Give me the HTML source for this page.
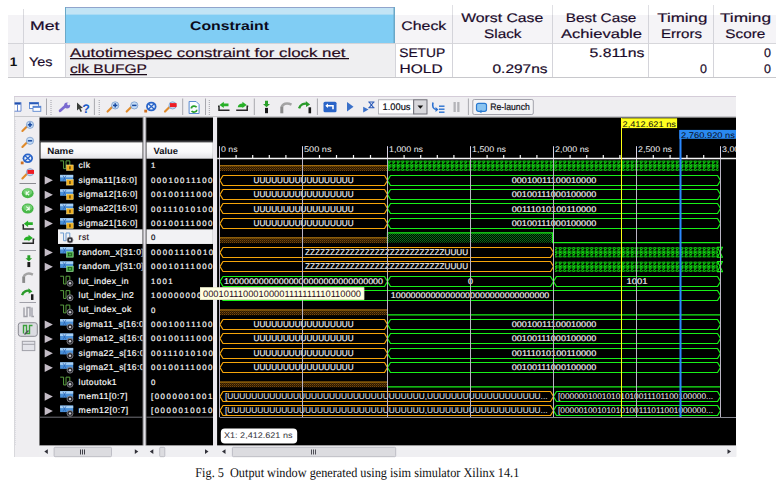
<!DOCTYPE html>
<html><head><meta charset="utf-8"><style>html,body{margin:0;padding:0;background:#fff;width:784px;height:496px;overflow:hidden}svg{display:block}</style></head>
<body><svg width="784" height="496" viewBox="0 0 784 496" shape-rendering="auto" text-rendering="geometricPrecision">
<rect x="0" y="0" width="784" height="496" fill="#ffffff"/>
<rect x="8.00" y="15.00" width="387.00" height="28.00" fill="#f4f3f6" />
<rect x="395.00" y="15.00" width="381.00" height="28.00" fill="#f5f4f7" />
<rect x="65.00" y="7.00" width="330.00" height="36.00" fill="#80cdf4" />
<rect x="65.00" y="7.00" width="330.00" height="7.60" fill="#c2e4f5" />
<line x1="65.00" y1="7.50" x2="395.00" y2="7.50" stroke="#90a4cc" stroke-width="1" />
<rect x="393.50" y="7.00" width="1.50" height="36.00" fill="#6aa8c8" />
<rect x="65.00" y="7.00" width="1.00" height="36.00" fill="#6aa8c8" />
<line x1="8.00" y1="43.50" x2="776.00" y2="43.50" stroke="#cdcdd2" stroke-width="1" />
<rect x="8.00" y="43.80" width="15.00" height="33.00" fill="#f0eff2" />
<rect x="23.00" y="43.80" width="42.00" height="33.00" fill="#ffffff" />
<rect x="65.00" y="43.80" width="330.00" height="33.00" fill="#efeff1" />
<rect x="395.00" y="43.80" width="381.00" height="33.00" fill="#ffffff" />
<line x1="8.00" y1="77.50" x2="776.00" y2="77.50" stroke="#c8c8cc" stroke-width="1" />
<line x1="23.50" y1="15.00" x2="23.50" y2="77.00" stroke="#d4d4da" stroke-width="1" />
<line x1="65.50" y1="43.50" x2="65.50" y2="77.00" stroke="#d4d4da" stroke-width="1" />
<line x1="395.50" y1="43.50" x2="395.50" y2="77.00" stroke="#d4d4da" stroke-width="1" />
<line x1="452.50" y1="15.00" x2="452.50" y2="77.00" stroke="#d4d4da" stroke-width="1" />
<line x1="552.50" y1="15.00" x2="552.50" y2="77.00" stroke="#d4d4da" stroke-width="1" />
<line x1="648.50" y1="15.00" x2="648.50" y2="77.00" stroke="#d4d4da" stroke-width="1" />
<line x1="713.50" y1="15.00" x2="713.50" y2="77.00" stroke="#d4d4da" stroke-width="1" />
<line x1="23.50" y1="9.00" x2="23.50" y2="15.00" stroke="#dcdce0" stroke-width="1" />
<line x1="452.50" y1="5.00" x2="452.50" y2="15.00" stroke="#e0e0e4" stroke-width="1" />
<line x1="552.50" y1="5.00" x2="552.50" y2="15.00" stroke="#e0e0e4" stroke-width="1" />
<line x1="648.50" y1="5.00" x2="648.50" y2="15.00" stroke="#e0e0e4" stroke-width="1" />
<line x1="713.50" y1="5.00" x2="713.50" y2="15.00" stroke="#e0e0e4" stroke-width="1" />
<text x="30.00" y="29.70" font-size="12.5" fill="#1a0a2a" font-family="Liberation Sans" textLength="29.50" lengthAdjust="spacingAndGlyphs" stroke="#1a0a2a" stroke-width="0.18" >Met</text>
<text x="190.00" y="29.80" font-size="12.5" fill="#0a0a1a" font-family="Liberation Sans" font-weight="bold" textLength="79.00" lengthAdjust="spacingAndGlyphs" >Constraint</text>
<text x="401.30" y="29.60" font-size="12.5" fill="#1a0a2a" font-family="Liberation Sans" textLength="45.00" lengthAdjust="spacingAndGlyphs" stroke="#1a0a2a" stroke-width="0.18" >Check</text>
<text x="461.20" y="21.90" font-size="12.5" fill="#1a0a2a" font-family="Liberation Sans" textLength="82.00" lengthAdjust="spacingAndGlyphs" stroke="#1a0a2a" stroke-width="0.18" >Worst Case</text>
<text x="484.00" y="38.00" font-size="12.5" fill="#1a0a2a" font-family="Liberation Sans" textLength="37.50" lengthAdjust="spacingAndGlyphs" stroke="#1a0a2a" stroke-width="0.18" >Slack</text>
<text x="565.80" y="21.90" font-size="12.5" fill="#1a0a2a" font-family="Liberation Sans" textLength="70.50" lengthAdjust="spacingAndGlyphs" stroke="#1a0a2a" stroke-width="0.18" >Best Case</text>
<text x="561.00" y="38.00" font-size="12.5" fill="#1a0a2a" font-family="Liberation Sans" textLength="81.00" lengthAdjust="spacingAndGlyphs" stroke="#1a0a2a" stroke-width="0.18" >Achievable</text>
<text x="657.30" y="21.90" font-size="12.5" fill="#1a0a2a" font-family="Liberation Sans" textLength="50.00" lengthAdjust="spacingAndGlyphs" stroke="#1a0a2a" stroke-width="0.18" >Timing</text>
<text x="661.00" y="38.00" font-size="12.5" fill="#1a0a2a" font-family="Liberation Sans" textLength="41.00" lengthAdjust="spacingAndGlyphs" stroke="#1a0a2a" stroke-width="0.18" >Errors</text>
<text x="720.00" y="21.90" font-size="12.5" fill="#1a0a2a" font-family="Liberation Sans" textLength="51.00" lengthAdjust="spacingAndGlyphs" stroke="#1a0a2a" stroke-width="0.18" >Timing</text>
<text x="725.30" y="38.00" font-size="12.5" fill="#1a0a2a" font-family="Liberation Sans" textLength="40.00" lengthAdjust="spacingAndGlyphs" stroke="#1a0a2a" stroke-width="0.18" >Score</text>
<text x="9.80" y="65.80" font-size="12.5" fill="#111" font-family="Liberation Sans" font-weight="bold" textLength="7.50" lengthAdjust="spacingAndGlyphs" >1</text>
<text x="29.00" y="66.00" font-size="12.5" fill="#1a0a2a" font-family="Liberation Sans" textLength="23.50" lengthAdjust="spacingAndGlyphs" stroke="#1a0a2a" stroke-width="0.18" >Yes</text>
<text x="70.00" y="56.50" font-size="12.5" fill="#2a0a20" font-family="Liberation Sans" textLength="275.50" lengthAdjust="spacingAndGlyphs" stroke="#2a0a20" stroke-width="0.18" >Autotimespec constraint for clock net</text>
<line x1="70.00" y1="58.60" x2="349.00" y2="58.60" stroke="#1a0a18" stroke-width="1.3" />
<text x="70.00" y="72.70" font-size="12.5" fill="#2a0a20" font-family="Liberation Sans" textLength="77.00" lengthAdjust="spacingAndGlyphs" stroke="#2a0a20" stroke-width="0.18" >clk BUFGP</text>
<line x1="70.00" y1="74.60" x2="147.00" y2="74.60" stroke="#1a0a18" stroke-width="1.3" />
<text x="399.20" y="56.80" font-size="12.5" fill="#1a0a2a" font-family="Liberation Sans" textLength="46.00" lengthAdjust="spacingAndGlyphs" stroke="#1a0a2a" stroke-width="0.18" >SETUP</text>
<text x="399.60" y="72.60" font-size="12.5" fill="#1a0a2a" font-family="Liberation Sans" textLength="43.00" lengthAdjust="spacingAndGlyphs" stroke="#1a0a2a" stroke-width="0.18" >HOLD</text>
<text x="589.50" y="56.60" font-size="12.5" fill="#1a0a2a" font-family="Liberation Sans" textLength="55.00" lengthAdjust="spacingAndGlyphs" stroke="#1a0a2a" stroke-width="0.18" >5.811ns</text>
<text x="492.50" y="72.70" font-size="12.5" fill="#1a0a2a" font-family="Liberation Sans" textLength="55.00" lengthAdjust="spacingAndGlyphs" stroke="#1a0a2a" stroke-width="0.18" >0.297ns</text>
<text x="707.00" y="72.60" font-size="12.5" fill="#1a0a2a" font-family="Liberation Sans" text-anchor="end" stroke="#1a0a2a" stroke-width="0.18" >0</text>
<text x="771.00" y="56.60" font-size="12.5" fill="#1a0a2a" font-family="Liberation Sans" text-anchor="end" stroke="#1a0a2a" stroke-width="0.18" >0</text>
<text x="771.00" y="72.60" font-size="12.5" fill="#1a0a2a" font-family="Liberation Sans" text-anchor="end" stroke="#1a0a2a" stroke-width="0.18" >0</text>
<rect x="14.00" y="96.00" width="722.00" height="361.00" fill="#efeef1" />
<line x1="14.50" y1="96.00" x2="14.50" y2="457.00" stroke="#d8d8dc" stroke-width="1" />
<line x1="14.00" y1="96.50" x2="736.00" y2="96.50" stroke="#d4ccd8" stroke-width="1" />
<line x1="14.00" y1="116.50" x2="736.00" y2="116.50" stroke="#c8c8cc" stroke-width="1" />
<rect x="39.50" y="117.50" width="103.00" height="328.10" fill="#000" />
<rect x="142.50" y="117.50" width="1.00" height="328.10" fill="#000" />
<rect x="146.30" y="117.50" width="66.70" height="328.10" fill="#000" />
<rect x="145.50" y="117.50" width="0.80" height="328.10" fill="#000" />
<rect x="143.50" y="117.50" width="2.00" height="328.10" fill="#e4e2e8" />
<rect x="213.00" y="117.50" width="4.10" height="328.10" fill="#ebe9ee" />
<rect x="217.10" y="117.50" width="518.90" height="328.10" fill="#000" />
<line x1="39.50" y1="141.20" x2="142.50" y2="141.20" stroke="#5a5a60" stroke-width="1" />
<line x1="146.30" y1="141.20" x2="213.00" y2="141.20" stroke="#5a5a60" stroke-width="1" />
<defs><linearGradient id="hg" x1="0" y1="0" x2="0" y2="1"><stop offset="0" stop-color="#ffffff"/><stop offset="0.6" stop-color="#f8f8fa"/><stop offset="1" stop-color="#e2e2e6"/></linearGradient></defs>
<rect x="40.50" y="142.30" width="102.00" height="16.40" fill="url(#hg)" />
<rect x="146.50" y="142.30" width="66.40" height="16.40" fill="url(#hg)" />
<text x="47.20" y="153.80" font-size="9" fill="#101018" font-family="Liberation Sans" font-weight="bold" textLength="26.50" lengthAdjust="spacingAndGlyphs" >Name</text>
<text x="153.50" y="153.80" font-size="9" fill="#101018" font-family="Liberation Sans" font-weight="bold" textLength="24.50" lengthAdjust="spacingAndGlyphs" >Value</text>
<line x1="46.50" y1="98.50" x2="46.50" y2="115.00" stroke="#a8a8ae" stroke-width="1" />
<line x1="94.40" y1="98.50" x2="94.40" y2="115.00" stroke="#a8a8ae" stroke-width="1" />
<line x1="182.70" y1="98.50" x2="182.70" y2="115.00" stroke="#a8a8ae" stroke-width="1" />
<line x1="205.50" y1="98.50" x2="205.50" y2="115.00" stroke="#a8a8ae" stroke-width="1" />
<line x1="254.30" y1="98.50" x2="254.30" y2="115.00" stroke="#a8a8ae" stroke-width="1" />
<line x1="317.40" y1="98.50" x2="317.40" y2="115.00" stroke="#a8a8ae" stroke-width="1" />
<line x1="468.40" y1="98.50" x2="468.40" y2="115.00" stroke="#a8a8ae" stroke-width="1" />
<rect x="50.50" y="100.00" width="1.00" height="1.00" fill="#a0a0a8" />
<rect x="50.50" y="102.00" width="1.00" height="1.00" fill="#a0a0a8" />
<rect x="50.50" y="104.00" width="1.00" height="1.00" fill="#a0a0a8" />
<rect x="50.50" y="106.00" width="1.00" height="1.00" fill="#a0a0a8" />
<rect x="50.50" y="108.00" width="1.00" height="1.00" fill="#a0a0a8" />
<rect x="50.50" y="110.00" width="1.00" height="1.00" fill="#a0a0a8" />
<rect x="50.50" y="112.00" width="1.00" height="1.00" fill="#a0a0a8" />
<rect x="50.50" y="114.00" width="1.00" height="1.00" fill="#a0a0a8" />
<rect x="98.70" y="100.00" width="1.00" height="1.00" fill="#a0a0a8" />
<rect x="98.70" y="102.00" width="1.00" height="1.00" fill="#a0a0a8" />
<rect x="98.70" y="104.00" width="1.00" height="1.00" fill="#a0a0a8" />
<rect x="98.70" y="106.00" width="1.00" height="1.00" fill="#a0a0a8" />
<rect x="98.70" y="108.00" width="1.00" height="1.00" fill="#a0a0a8" />
<rect x="98.70" y="110.00" width="1.00" height="1.00" fill="#a0a0a8" />
<rect x="98.70" y="112.00" width="1.00" height="1.00" fill="#a0a0a8" />
<rect x="98.70" y="114.00" width="1.00" height="1.00" fill="#a0a0a8" />
<rect x="208.80" y="100.00" width="1.00" height="1.00" fill="#a0a0a8" />
<rect x="208.80" y="102.00" width="1.00" height="1.00" fill="#a0a0a8" />
<rect x="208.80" y="104.00" width="1.00" height="1.00" fill="#a0a0a8" />
<rect x="208.80" y="106.00" width="1.00" height="1.00" fill="#a0a0a8" />
<rect x="208.80" y="108.00" width="1.00" height="1.00" fill="#a0a0a8" />
<rect x="208.80" y="110.00" width="1.00" height="1.00" fill="#a0a0a8" />
<rect x="208.80" y="112.00" width="1.00" height="1.00" fill="#a0a0a8" />
<rect x="208.80" y="114.00" width="1.00" height="1.00" fill="#a0a0a8" />
<rect x="14.50" y="102.30" width="6.50" height="9.00" fill="#ffffff" />
<rect x="14.50" y="102.30" width="6.50" height="2.30" fill="#2050b0" />
<line x1="17.50" y1="104.60" x2="17.50" y2="111.20" stroke="#6a8ad0" stroke-width="1" />
<line x1="14.50" y1="111.20" x2="21.00" y2="111.20" stroke="#6a8ad0" stroke-width="1" />
<line x1="21.00" y1="102.30" x2="21.00" y2="111.20" stroke="#6a8ad0" stroke-width="1" />
<rect x="29.5" y="102.5" width="9" height="6" fill="#fff" stroke="#5a86d0" stroke-width="0.9"/>
<rect x="29.50" y="102.50" width="9.00" height="1.80" fill="#2a5ab8" />
<rect x="33" y="106.3" width="7.8" height="5" fill="#fff" stroke="#5a86d0" stroke-width="0.9"/>
<rect x="33.00" y="106.30" width="7.80" height="1.50" fill="#4a7ad0" />
<g transform="translate(58.60,102.30) scale(1.0)"><path d="M1.5,8.5 L6.5,4" stroke="#7a6ad0" stroke-width="2.8" stroke-linecap="round"/><circle cx="8.5" cy="3.2" r="3" fill="#7a6ad0"/><circle cx="10" cy="1.6" r="1.4" fill="#efeef1"/></g>
<g transform="translate(77.00,102.50) scale(1.0)"><path d="M0,0 L0,8 L2,6.3 L3.6,9.5 L5,8.8 L3.5,5.8 L6,5.6 Z" fill="#383c38"/><text x="5.2" y="10" font-size="12.5" font-weight="bold" fill="#1a5ac8" font-family="Liberation Sans">?</text></g>
<g transform="translate(106.40,101.60) scale(1.0)"><line x1="1.2" y1="10" x2="6" y2="5.2" stroke="#e08a2a" stroke-width="2.1" stroke-linecap="round"/><circle cx="8.8" cy="3.8" r="3.6" fill="#c4dcf6" stroke="#7a9ccc" stroke-width="0.8"/><line x1="6.6" y1="3.8" x2="11" y2="3.8" stroke="#1a4aa0" stroke-width="1.5"/><line x1="8.8" y1="1.6" x2="8.8" y2="6" stroke="#1a4aa0" stroke-width="1.5"/></g>
<g transform="translate(125.50,101.60) scale(1.0)"><line x1="1.2" y1="10" x2="6" y2="5.2" stroke="#e08a2a" stroke-width="2.1" stroke-linecap="round"/><circle cx="8.8" cy="3.8" r="3.6" fill="#c4dcf6" stroke="#7a9ccc" stroke-width="0.8"/><line x1="6.6" y1="3.8" x2="11" y2="3.8" stroke="#1a4aa0" stroke-width="1.5"/></g>
<g transform="translate(144.00,101.50) scale(1.0)"><rect x="0.3" y="8.2" width="2.8" height="2.8" fill="#d07020"/><ellipse cx="7.3" cy="5" rx="5.2" ry="4.8" fill="#2a64c8"/><ellipse cx="7.3" cy="5" rx="3.4" ry="3" fill="#e8f0fc"/><path d="M4.3,2.2 L10.3,7.8 M10.3,2.2 L4.3,7.8" stroke="#2a64c8" stroke-width="1.3"/></g>
<g transform="translate(163.80,101.60) scale(1.0)"><line x1="1.2" y1="10" x2="6" y2="5.2" stroke="#e08a2a" stroke-width="2.1" stroke-linecap="round"/><circle cx="8.8" cy="3.8" r="3.6" fill="#c4dcf6" stroke="#7a9ccc" stroke-width="0.8"/><rect x="6.2" y="1.5" width="6.6" height="4" fill="#ee1c24"/></g>
<g transform="translate(188.60,101.00) scale(1.0)"><path d="M0.5,0.5 H7.5 L10.5,3.5 V12.5 H0.5 Z" fill="#f8fbff" stroke="#5a8ad0" stroke-width="1"/><path d="M2.8,7.5 A2.8,2.3 0 0 1 8,6.2" stroke="#2aa02a" stroke-width="1.7" fill="none"/><path d="M8.2,8.8 A2.8,2.3 0 0 1 3,10" stroke="#2aa02a" stroke-width="1.7" fill="none"/></g>
<g transform="translate(217.00,101.70) scale(1.0)"><path d="M1,4.5 H2 V8.5 H12.5" stroke="#282828" stroke-width="1.5" fill="none"/><path d="M2.5,3.2 L6.8,0 V1.8 H11.5 V4.6 H6.8 V6.4 Z" fill="#28b028"/></g>
<g transform="translate(235.20,101.70) scale(1.0)"><path d="M1,8.5 H12 V4.5 H13" stroke="#282828" stroke-width="1.5" fill="none"/><path d="M11.5,3.2 L7.2,0 V1.8 C4.5,1.8 3,3 2.5,5.5 H7.2 V6.4 Z" fill="#28b028"/></g>
<g transform="translate(263.00,100.70) scale(1.0)"><path d="M2,0 H5 V3.2 H7 L3.5,6.5 L0,3.2 H2 Z" fill="#2aa02a"/><rect x="2" y="7.2" width="3" height="5.3" fill="#1a1a1a"/></g>
<g transform="translate(279.50,101.80) scale(1.0)"><path d="M2.2,5.5 C3,2 7,0.5 12,2.8" stroke="#a4a4a4" stroke-width="2.6" fill="none"/><rect x="0.8" y="5" width="3" height="6.5" fill="#8a8a8a"/></g>
<g transform="translate(298.30,102.30) scale(1.0)"><path d="M0.8,6 C2,2 6,0.8 8.5,1.5" stroke="#2a9a2a" stroke-width="2.4" fill="none"/><path d="M7.5,-1.2 L11.8,2.2 L7.8,4.6 Z" fill="#2a9a2a"/><rect x="10.2" y="5" width="2.6" height="6" fill="#1a1a1a"/></g>
<g transform="translate(323.50,101.70) scale(1.0)"><rect x="0" y="0" width="13" height="10.5" rx="1.5" fill="#2a64c8"/><path d="M3,4 H9.5 V7.5" stroke="#fff" stroke-width="1.6" fill="none"/><path d="M1.8,4 L4.5,1.8 V6.2 Z" fill="#fff"/></g>
<path d="M347,102 L353.5,106.8 L347,111.6 Z" fill="#3a70c8"/>
<path d="M363.2,106.8 L368.5,109.6 L363.2,112.4 Z" fill="#3a70c8"/>
<path d="M368.3,102 H374.5 M368.3,107.8 H374.5 M369,102 L373.8,107.8 M373.8,102 L369,107.8" stroke="#2a5ab8" stroke-width="1.1" fill="none"/>
<rect x="378.5" y="99.8" width="35.2" height="14.2" fill="#ffffff" stroke="#a8a8b0" stroke-width="0.8"/>
<text x="382.50" y="110.30" font-size="9.5" fill="#101018" font-family="Liberation Sans" textLength="28.00" lengthAdjust="spacingAndGlyphs" stroke="#101018" stroke-width="0.2" >1.00us</text>
<rect x="413.7" y="99.8" width="13.3" height="14.2" fill="#d8d8dc" stroke="#606068" stroke-width="0.9"/>
<path d="M417.5,105.5 L423.2,105.5 L420.35,108.8 Z" fill="#101010"/>
<g transform="translate(432.00,101.50) scale(1.0)"><path d="M1,1 C0,5 1,8 5,8" stroke="#2a70d0" stroke-width="1.6" fill="none"/><path d="M3.5,5.5 L6.5,8 L3.5,10.5 Z" fill="#2a70d0"/><rect x="7" y="4" width="5.5" height="1.4" fill="#2a70d0"/><rect x="7" y="7" width="5.5" height="1.4" fill="#2a70d0"/><rect x="7" y="10" width="5.5" height="1.4" fill="#2a70d0"/></g>
<rect x="453.50" y="102.00" width="2.30" height="10.00" fill="#b4b4b8" />
<rect x="457.20" y="102.00" width="2.30" height="10.00" fill="#b4b4b8" />
<rect x="472.8" y="99.5" width="60.5" height="15" rx="1.5" fill="#f4f4f6" stroke="#9a9aa4" stroke-width="0.9"/>
<g transform="translate(476.00,102.30) scale(1.0)"><rect x="0.5" y="1" width="10" height="8" rx="2" fill="#8ac4f0" stroke="#2a7ad0" stroke-width="1.2"/><path d="M3,9.5 L5.5,7.5 L5.5,11 Z" fill="#2a7ad0"/></g>
<text x="490.30" y="110.30" font-size="9.5" fill="#101018" font-family="Liberation Sans" textLength="39.50" lengthAdjust="spacingAndGlyphs" stroke="#101018" stroke-width="0.2" >Re-launch</text>
<rect x="15.00" y="120.00" width="1.00" height="1.00" fill="#dcdce2" />
<rect x="15.00" y="122.00" width="1.00" height="1.00" fill="#dcdce2" />
<rect x="15.00" y="124.00" width="1.00" height="1.00" fill="#dcdce2" />
<rect x="15.00" y="126.00" width="1.00" height="1.00" fill="#dcdce2" />
<rect x="15.00" y="128.00" width="1.00" height="1.00" fill="#dcdce2" />
<rect x="15.00" y="130.00" width="1.00" height="1.00" fill="#dcdce2" />
<rect x="15.00" y="132.00" width="1.00" height="1.00" fill="#dcdce2" />
<rect x="15.00" y="134.00" width="1.00" height="1.00" fill="#dcdce2" />
<rect x="15.00" y="136.00" width="1.00" height="1.00" fill="#dcdce2" />
<rect x="15.00" y="138.00" width="1.00" height="1.00" fill="#dcdce2" />
<rect x="15.00" y="140.00" width="1.00" height="1.00" fill="#dcdce2" />
<rect x="15.00" y="142.00" width="1.00" height="1.00" fill="#dcdce2" />
<rect x="15.00" y="144.00" width="1.00" height="1.00" fill="#dcdce2" />
<rect x="15.00" y="146.00" width="1.00" height="1.00" fill="#dcdce2" />
<rect x="15.00" y="148.00" width="1.00" height="1.00" fill="#dcdce2" />
<rect x="15.00" y="150.00" width="1.00" height="1.00" fill="#dcdce2" />
<rect x="15.00" y="152.00" width="1.00" height="1.00" fill="#dcdce2" />
<rect x="15.00" y="154.00" width="1.00" height="1.00" fill="#dcdce2" />
<rect x="15.00" y="156.00" width="1.00" height="1.00" fill="#dcdce2" />
<rect x="15.00" y="158.00" width="1.00" height="1.00" fill="#dcdce2" />
<rect x="15.00" y="160.00" width="1.00" height="1.00" fill="#dcdce2" />
<rect x="15.00" y="162.00" width="1.00" height="1.00" fill="#dcdce2" />
<rect x="15.00" y="164.00" width="1.00" height="1.00" fill="#dcdce2" />
<rect x="15.00" y="166.00" width="1.00" height="1.00" fill="#dcdce2" />
<rect x="15.00" y="168.00" width="1.00" height="1.00" fill="#dcdce2" />
<rect x="15.00" y="170.00" width="1.00" height="1.00" fill="#dcdce2" />
<rect x="15.00" y="172.00" width="1.00" height="1.00" fill="#dcdce2" />
<rect x="15.00" y="174.00" width="1.00" height="1.00" fill="#dcdce2" />
<rect x="15.00" y="176.00" width="1.00" height="1.00" fill="#dcdce2" />
<rect x="15.00" y="178.00" width="1.00" height="1.00" fill="#dcdce2" />
<rect x="15.00" y="180.00" width="1.00" height="1.00" fill="#dcdce2" />
<rect x="15.00" y="182.00" width="1.00" height="1.00" fill="#dcdce2" />
<rect x="15.00" y="184.00" width="1.00" height="1.00" fill="#dcdce2" />
<rect x="15.00" y="186.00" width="1.00" height="1.00" fill="#dcdce2" />
<rect x="15.00" y="188.00" width="1.00" height="1.00" fill="#dcdce2" />
<rect x="15.00" y="190.00" width="1.00" height="1.00" fill="#dcdce2" />
<rect x="15.00" y="192.00" width="1.00" height="1.00" fill="#dcdce2" />
<rect x="15.00" y="194.00" width="1.00" height="1.00" fill="#dcdce2" />
<rect x="15.00" y="196.00" width="1.00" height="1.00" fill="#dcdce2" />
<rect x="15.00" y="198.00" width="1.00" height="1.00" fill="#dcdce2" />
<rect x="15.00" y="200.00" width="1.00" height="1.00" fill="#dcdce2" />
<rect x="15.00" y="202.00" width="1.00" height="1.00" fill="#dcdce2" />
<rect x="15.00" y="204.00" width="1.00" height="1.00" fill="#dcdce2" />
<rect x="15.00" y="206.00" width="1.00" height="1.00" fill="#dcdce2" />
<rect x="15.00" y="208.00" width="1.00" height="1.00" fill="#dcdce2" />
<rect x="15.00" y="210.00" width="1.00" height="1.00" fill="#dcdce2" />
<rect x="15.00" y="212.00" width="1.00" height="1.00" fill="#dcdce2" />
<rect x="15.00" y="214.00" width="1.00" height="1.00" fill="#dcdce2" />
<rect x="15.00" y="216.00" width="1.00" height="1.00" fill="#dcdce2" />
<rect x="15.00" y="218.00" width="1.00" height="1.00" fill="#dcdce2" />
<rect x="15.00" y="220.00" width="1.00" height="1.00" fill="#dcdce2" />
<rect x="15.00" y="222.00" width="1.00" height="1.00" fill="#dcdce2" />
<rect x="15.00" y="224.00" width="1.00" height="1.00" fill="#dcdce2" />
<rect x="15.00" y="226.00" width="1.00" height="1.00" fill="#dcdce2" />
<rect x="15.00" y="228.00" width="1.00" height="1.00" fill="#dcdce2" />
<rect x="15.00" y="230.00" width="1.00" height="1.00" fill="#dcdce2" />
<rect x="15.00" y="232.00" width="1.00" height="1.00" fill="#dcdce2" />
<rect x="15.00" y="234.00" width="1.00" height="1.00" fill="#dcdce2" />
<rect x="15.00" y="236.00" width="1.00" height="1.00" fill="#dcdce2" />
<rect x="15.00" y="238.00" width="1.00" height="1.00" fill="#dcdce2" />
<rect x="15.00" y="240.00" width="1.00" height="1.00" fill="#dcdce2" />
<rect x="15.00" y="242.00" width="1.00" height="1.00" fill="#dcdce2" />
<rect x="15.00" y="244.00" width="1.00" height="1.00" fill="#dcdce2" />
<rect x="15.00" y="246.00" width="1.00" height="1.00" fill="#dcdce2" />
<rect x="15.00" y="248.00" width="1.00" height="1.00" fill="#dcdce2" />
<rect x="15.00" y="250.00" width="1.00" height="1.00" fill="#dcdce2" />
<rect x="15.00" y="252.00" width="1.00" height="1.00" fill="#dcdce2" />
<rect x="15.00" y="254.00" width="1.00" height="1.00" fill="#dcdce2" />
<rect x="15.00" y="256.00" width="1.00" height="1.00" fill="#dcdce2" />
<rect x="15.00" y="258.00" width="1.00" height="1.00" fill="#dcdce2" />
<rect x="15.00" y="260.00" width="1.00" height="1.00" fill="#dcdce2" />
<rect x="15.00" y="262.00" width="1.00" height="1.00" fill="#dcdce2" />
<rect x="15.00" y="264.00" width="1.00" height="1.00" fill="#dcdce2" />
<rect x="15.00" y="266.00" width="1.00" height="1.00" fill="#dcdce2" />
<rect x="15.00" y="268.00" width="1.00" height="1.00" fill="#dcdce2" />
<rect x="15.00" y="270.00" width="1.00" height="1.00" fill="#dcdce2" />
<rect x="15.00" y="272.00" width="1.00" height="1.00" fill="#dcdce2" />
<rect x="15.00" y="274.00" width="1.00" height="1.00" fill="#dcdce2" />
<rect x="15.00" y="276.00" width="1.00" height="1.00" fill="#dcdce2" />
<rect x="15.00" y="278.00" width="1.00" height="1.00" fill="#dcdce2" />
<rect x="15.00" y="280.00" width="1.00" height="1.00" fill="#dcdce2" />
<rect x="15.00" y="282.00" width="1.00" height="1.00" fill="#dcdce2" />
<rect x="15.00" y="284.00" width="1.00" height="1.00" fill="#dcdce2" />
<rect x="15.00" y="286.00" width="1.00" height="1.00" fill="#dcdce2" />
<rect x="15.00" y="288.00" width="1.00" height="1.00" fill="#dcdce2" />
<rect x="15.00" y="290.00" width="1.00" height="1.00" fill="#dcdce2" />
<rect x="15.00" y="292.00" width="1.00" height="1.00" fill="#dcdce2" />
<rect x="15.00" y="294.00" width="1.00" height="1.00" fill="#dcdce2" />
<rect x="15.00" y="296.00" width="1.00" height="1.00" fill="#dcdce2" />
<rect x="15.00" y="298.00" width="1.00" height="1.00" fill="#dcdce2" />
<rect x="15.00" y="300.00" width="1.00" height="1.00" fill="#dcdce2" />
<rect x="15.00" y="302.00" width="1.00" height="1.00" fill="#dcdce2" />
<rect x="15.00" y="304.00" width="1.00" height="1.00" fill="#dcdce2" />
<rect x="15.00" y="306.00" width="1.00" height="1.00" fill="#dcdce2" />
<rect x="15.00" y="308.00" width="1.00" height="1.00" fill="#dcdce2" />
<rect x="15.00" y="310.00" width="1.00" height="1.00" fill="#dcdce2" />
<rect x="15.00" y="312.00" width="1.00" height="1.00" fill="#dcdce2" />
<rect x="15.00" y="314.00" width="1.00" height="1.00" fill="#dcdce2" />
<rect x="15.00" y="316.00" width="1.00" height="1.00" fill="#dcdce2" />
<rect x="15.00" y="318.00" width="1.00" height="1.00" fill="#dcdce2" />
<rect x="15.00" y="320.00" width="1.00" height="1.00" fill="#dcdce2" />
<rect x="15.00" y="322.00" width="1.00" height="1.00" fill="#dcdce2" />
<rect x="15.00" y="324.00" width="1.00" height="1.00" fill="#dcdce2" />
<rect x="15.00" y="326.00" width="1.00" height="1.00" fill="#dcdce2" />
<rect x="15.00" y="328.00" width="1.00" height="1.00" fill="#dcdce2" />
<rect x="15.00" y="330.00" width="1.00" height="1.00" fill="#dcdce2" />
<rect x="15.00" y="332.00" width="1.00" height="1.00" fill="#dcdce2" />
<rect x="15.00" y="334.00" width="1.00" height="1.00" fill="#dcdce2" />
<rect x="15.00" y="336.00" width="1.00" height="1.00" fill="#dcdce2" />
<rect x="15.00" y="338.00" width="1.00" height="1.00" fill="#dcdce2" />
<rect x="15.00" y="340.00" width="1.00" height="1.00" fill="#dcdce2" />
<rect x="15.00" y="342.00" width="1.00" height="1.00" fill="#dcdce2" />
<rect x="15.00" y="344.00" width="1.00" height="1.00" fill="#dcdce2" />
<rect x="15.00" y="346.00" width="1.00" height="1.00" fill="#dcdce2" />
<rect x="15.00" y="348.00" width="1.00" height="1.00" fill="#dcdce2" />
<rect x="15.00" y="350.00" width="1.00" height="1.00" fill="#dcdce2" />
<rect x="15.00" y="352.00" width="1.00" height="1.00" fill="#dcdce2" />
<rect x="15.00" y="354.00" width="1.00" height="1.00" fill="#dcdce2" />
<rect x="15.00" y="356.00" width="1.00" height="1.00" fill="#dcdce2" />
<rect x="15.00" y="358.00" width="1.00" height="1.00" fill="#dcdce2" />
<rect x="15.00" y="360.00" width="1.00" height="1.00" fill="#dcdce2" />
<rect x="15.00" y="362.00" width="1.00" height="1.00" fill="#dcdce2" />
<rect x="15.00" y="364.00" width="1.00" height="1.00" fill="#dcdce2" />
<rect x="15.00" y="366.00" width="1.00" height="1.00" fill="#dcdce2" />
<rect x="15.00" y="368.00" width="1.00" height="1.00" fill="#dcdce2" />
<rect x="15.00" y="370.00" width="1.00" height="1.00" fill="#dcdce2" />
<rect x="15.00" y="372.00" width="1.00" height="1.00" fill="#dcdce2" />
<rect x="15.00" y="374.00" width="1.00" height="1.00" fill="#dcdce2" />
<rect x="15.00" y="376.00" width="1.00" height="1.00" fill="#dcdce2" />
<rect x="15.00" y="378.00" width="1.00" height="1.00" fill="#dcdce2" />
<rect x="15.00" y="380.00" width="1.00" height="1.00" fill="#dcdce2" />
<rect x="15.00" y="382.00" width="1.00" height="1.00" fill="#dcdce2" />
<rect x="15.00" y="384.00" width="1.00" height="1.00" fill="#dcdce2" />
<rect x="15.00" y="386.00" width="1.00" height="1.00" fill="#dcdce2" />
<rect x="15.00" y="388.00" width="1.00" height="1.00" fill="#dcdce2" />
<rect x="15.00" y="390.00" width="1.00" height="1.00" fill="#dcdce2" />
<rect x="15.00" y="392.00" width="1.00" height="1.00" fill="#dcdce2" />
<rect x="15.00" y="394.00" width="1.00" height="1.00" fill="#dcdce2" />
<rect x="15.00" y="396.00" width="1.00" height="1.00" fill="#dcdce2" />
<rect x="15.00" y="398.00" width="1.00" height="1.00" fill="#dcdce2" />
<rect x="15.00" y="400.00" width="1.00" height="1.00" fill="#dcdce2" />
<rect x="15.00" y="402.00" width="1.00" height="1.00" fill="#dcdce2" />
<rect x="15.00" y="404.00" width="1.00" height="1.00" fill="#dcdce2" />
<rect x="15.00" y="406.00" width="1.00" height="1.00" fill="#dcdce2" />
<rect x="15.00" y="408.00" width="1.00" height="1.00" fill="#dcdce2" />
<rect x="15.00" y="410.00" width="1.00" height="1.00" fill="#dcdce2" />
<rect x="15.00" y="412.00" width="1.00" height="1.00" fill="#dcdce2" />
<rect x="15.00" y="414.00" width="1.00" height="1.00" fill="#dcdce2" />
<rect x="15.00" y="416.00" width="1.00" height="1.00" fill="#dcdce2" />
<rect x="15.00" y="418.00" width="1.00" height="1.00" fill="#dcdce2" />
<rect x="15.00" y="420.00" width="1.00" height="1.00" fill="#dcdce2" />
<rect x="15.00" y="422.00" width="1.00" height="1.00" fill="#dcdce2" />
<rect x="15.00" y="424.00" width="1.00" height="1.00" fill="#dcdce2" />
<rect x="15.00" y="426.00" width="1.00" height="1.00" fill="#dcdce2" />
<rect x="15.00" y="428.00" width="1.00" height="1.00" fill="#dcdce2" />
<rect x="15.00" y="430.00" width="1.00" height="1.00" fill="#dcdce2" />
<rect x="15.00" y="432.00" width="1.00" height="1.00" fill="#dcdce2" />
<rect x="15.00" y="434.00" width="1.00" height="1.00" fill="#dcdce2" />
<rect x="15.00" y="436.00" width="1.00" height="1.00" fill="#dcdce2" />
<rect x="15.00" y="438.00" width="1.00" height="1.00" fill="#dcdce2" />
<rect x="15.00" y="440.00" width="1.00" height="1.00" fill="#dcdce2" />
<rect x="15.00" y="442.00" width="1.00" height="1.00" fill="#dcdce2" />
<rect x="15.00" y="444.00" width="1.00" height="1.00" fill="#dcdce2" />
<g transform="translate(21.20,121.00) scale(1.0)"><line x1="1.2" y1="10" x2="6" y2="5.2" stroke="#e08a2a" stroke-width="2.1" stroke-linecap="round"/><circle cx="8.8" cy="3.8" r="3.6" fill="#c4dcf6" stroke="#7a9ccc" stroke-width="0.8"/><line x1="6.6" y1="3.8" x2="11" y2="3.8" stroke="#1a4aa0" stroke-width="1.5"/><line x1="8.8" y1="1.6" x2="8.8" y2="6" stroke="#1a4aa0" stroke-width="1.5"/></g>
<g transform="translate(21.20,137.00) scale(1.0)"><line x1="1.2" y1="10" x2="6" y2="5.2" stroke="#e08a2a" stroke-width="2.1" stroke-linecap="round"/><circle cx="8.8" cy="3.8" r="3.6" fill="#c4dcf6" stroke="#7a9ccc" stroke-width="0.8"/><line x1="6.6" y1="3.8" x2="11" y2="3.8" stroke="#1a4aa0" stroke-width="1.5"/></g>
<g transform="translate(20.50,153.30) scale(1.0)"><rect x="0.3" y="8.2" width="2.8" height="2.8" fill="#d07020"/><ellipse cx="7.3" cy="5" rx="5.2" ry="4.8" fill="#2a64c8"/><ellipse cx="7.3" cy="5" rx="3.4" ry="3" fill="#e8f0fc"/><path d="M4.3,2.2 L10.3,7.8 M10.3,2.2 L4.3,7.8" stroke="#2a64c8" stroke-width="1.3"/></g>
<g transform="translate(21.20,168.40) scale(1.0)"><line x1="1.2" y1="10" x2="6" y2="5.2" stroke="#e08a2a" stroke-width="2.1" stroke-linecap="round"/><circle cx="8.8" cy="3.8" r="3.6" fill="#c4dcf6" stroke="#7a9ccc" stroke-width="0.8"/><rect x="6.2" y="1.5" width="6.6" height="4" fill="#ee1c24"/></g>
<line x1="19.50" y1="183.50" x2="36.00" y2="183.50" stroke="#8a8a90" stroke-width="1" />
<g transform="translate(22.20,188.30) scale(1.0)"><ellipse cx="5.5" cy="5" rx="5.9" ry="5" fill="#48b848"/><ellipse cx="5.5" cy="3.8" rx="4.4" ry="3" fill="#8ada8a" opacity="0.7"/><path d="M7,3 L4.5,5 L7,7 M4,3 V7" stroke="#f0fff0" stroke-width="1.1" fill="none"/></g>
<g transform="translate(22.20,203.60) scale(1.0)"><ellipse cx="5.5" cy="5" rx="5.9" ry="5" fill="#48b848"/><ellipse cx="5.5" cy="3.8" rx="4.4" ry="3" fill="#8ada8a" opacity="0.7"/><path d="M4,3 L6.5,5 L4,7 M7,3 V7" stroke="#f0fff0" stroke-width="1.1" fill="none"/></g>
<g transform="translate(21.30,220.50) scale(1.0)"><path d="M1,4.5 H2 V8.5 H12.5" stroke="#282828" stroke-width="1.5" fill="none"/><path d="M2.5,3.2 L6.8,0 V1.8 H11.5 V4.6 H6.8 V6.4 Z" fill="#28b028"/></g>
<g transform="translate(21.30,234.80) scale(1.0)"><path d="M1,8.5 H12 V4.5 H13" stroke="#282828" stroke-width="1.5" fill="none"/><path d="M11.5,3.2 L7.2,0 V1.8 C4.5,1.8 3,3 2.5,5.5 H7.2 V6.4 Z" fill="#28b028"/></g>
<line x1="19.50" y1="250.50" x2="36.00" y2="250.50" stroke="#a0a0a8" stroke-width="1" />
<g transform="translate(25.50,255.20) scale(0.95)"><path d="M2,0 H5 V3.2 H7 L3.5,6.5 L0,3.2 H2 Z" fill="#2aa02a"/><rect x="2" y="7.2" width="3" height="5.3" fill="#1a1a1a"/></g>
<g transform="translate(21.50,272.00) scale(0.95)"><path d="M2.2,5.5 C3,2 7,0.5 12,2.8" stroke="#a4a4a4" stroke-width="2.6" fill="none"/><rect x="0.8" y="5" width="3" height="6.5" fill="#8a8a8a"/></g>
<g transform="translate(21.30,289.50) scale(0.95)"><path d="M0.8,6 C2,2 6,0.8 8.5,1.5" stroke="#2a9a2a" stroke-width="2.4" fill="none"/><path d="M7.5,-1.2 L11.8,2.2 L7.8,4.6 Z" fill="#2a9a2a"/><rect x="10.2" y="5" width="2.6" height="6" fill="#1a1a1a"/></g>
<line x1="19.50" y1="302.50" x2="36.00" y2="302.50" stroke="#a0a0a8" stroke-width="1" />
<g transform="translate(23.00,306.50) scale(1.0)"><path d="M1,1 V10 H4 V1 H7 V10 M9,1 V10 H11" stroke="#a0a0a8" stroke-width="1.4" fill="none"/><rect x="6" y="4" width="4" height="5" fill="#b8b8c0"/></g>
<rect x="18.3" y="322.7" width="19" height="13.6" rx="2.5" fill="#dcdce2" stroke="#8a8a92" stroke-width="1"/>
<g transform="translate(22.50,324.50) scale(1.0)"><path d="M1,9 V1 H4 V9 H7 V1 H10" stroke="#3aa03a" stroke-width="1.4" fill="none"/><path d="M2,10 L6,6" stroke="#505058" stroke-width="1.4"/></g>
<rect x="22.3" y="341.3" width="12.5" height="9.3" fill="#e4e4ea" stroke="#a0a0a8" stroke-width="1"/>
<line x1="22.30" y1="344.30" x2="34.80" y2="344.30" stroke="#a0a0a8" stroke-width="1" />
<defs><clipPath id="cpn"><rect x="39.5" y="158" width="103" height="260"/></clipPath><clipPath id="cpv"><rect x="146.3" y="158" width="66.7" height="260"/></clipPath><clipPath id="cpw"><rect x="217.1" y="117.5" width="518.9" height="328"/></clipPath></defs>
<rect x="58.00" y="229.36" width="84.50" height="14.60" fill="#f2f2f4" />
<rect x="146.50" y="229.36" width="66.40" height="14.60" fill="#f2f2f4" />
<g clip-path="url(#cpn)">
<path d="M60.2,160.87 H63.6 V168.67 H66 V160.87 H69.8 V165.17" stroke="#5aa040" stroke-width="1" fill="none"/>
<rect x="66.6" y="164.97" width="6.6" height="5.4" fill="#f0b020" stroke="#fff0a0" stroke-width="0.5"/><rect x="69.39999999999999" y="166.27" width="1.1" height="3" fill="#302000"/>
<text x="78.60" y="168.22" font-size="8.6" fill="#fafafa" font-family="Liberation Sans" textLength="11.46" lengthAdjust="spacing" stroke="#fafafa" stroke-width="0.18" >clk</text>
<path d="M44.7,176.29 L52.9,180.29 L44.7,184.49 Z" fill="#c4bcc6"/>
<rect x="60.1" y="174.89" width="13.1" height="6.5" fill="#4a90d8"/>
<rect x="60.1" y="174.89" width="13.1" height="2.5" fill="#a8d0f4"/>
<path d="M63,175.59 L66,180.89 M66,175.59 L63,180.89" stroke="#2a60b0" stroke-width="0.7"/>
<rect x="66.6" y="179.69" width="6.6" height="5.4" fill="#f0b020" stroke="#fff0a0" stroke-width="0.5"/><rect x="69.39999999999999" y="180.99" width="1.1" height="3" fill="#302000"/>
<text x="78.60" y="182.64" font-size="8.6" fill="#fafafa" font-family="Liberation Sans" textLength="58.19" lengthAdjust="spacing" stroke="#fafafa" stroke-width="0.18" >sigma11[16:0]</text>
<path d="M44.7,190.71 L52.9,194.71 L44.7,198.91 Z" fill="#c4bcc6"/>
<rect x="60.1" y="189.31" width="13.1" height="6.5" fill="#4a90d8"/>
<rect x="60.1" y="189.31" width="13.1" height="2.5" fill="#a8d0f4"/>
<path d="M63,190.01 L66,195.31 M66,190.01 L63,195.31" stroke="#2a60b0" stroke-width="0.7"/>
<rect x="66.6" y="194.11" width="6.6" height="5.4" fill="#f0b020" stroke="#fff0a0" stroke-width="0.5"/><rect x="69.39999999999999" y="195.41000000000003" width="1.1" height="3" fill="#302000"/>
<text x="78.60" y="197.06" font-size="8.6" fill="#fafafa" font-family="Liberation Sans" textLength="58.89" lengthAdjust="spacing" stroke="#fafafa" stroke-width="0.18" >sigma12[16:0]</text>
<path d="M44.7,205.13 L52.9,209.13 L44.7,213.33 Z" fill="#c4bcc6"/>
<rect x="60.1" y="203.73" width="13.1" height="6.5" fill="#4a90d8"/>
<rect x="60.1" y="203.73" width="13.1" height="2.5" fill="#a8d0f4"/>
<path d="M63,204.43 L66,209.73 M66,204.43 L63,209.73" stroke="#2a60b0" stroke-width="0.7"/>
<rect x="66.6" y="208.53" width="6.6" height="5.4" fill="#f0b020" stroke="#fff0a0" stroke-width="0.5"/><rect x="69.39999999999999" y="209.83" width="1.1" height="3" fill="#302000"/>
<text x="78.60" y="211.48" font-size="8.6" fill="#fafafa" font-family="Liberation Sans" textLength="58.89" lengthAdjust="spacing" stroke="#fafafa" stroke-width="0.18" >sigma22[16:0]</text>
<path d="M44.7,219.55 L52.9,223.55 L44.7,227.75 Z" fill="#c4bcc6"/>
<rect x="60.1" y="218.15" width="13.1" height="6.5" fill="#4a90d8"/>
<rect x="60.1" y="218.15" width="13.1" height="2.5" fill="#a8d0f4"/>
<path d="M63,218.85 L66,224.15 M66,218.85 L63,224.15" stroke="#2a60b0" stroke-width="0.7"/>
<rect x="66.6" y="222.95" width="6.6" height="5.4" fill="#f0b020" stroke="#fff0a0" stroke-width="0.5"/><rect x="69.39999999999999" y="224.25" width="1.1" height="3" fill="#302000"/>
<text x="78.60" y="225.90" font-size="8.6" fill="#fafafa" font-family="Liberation Sans" textLength="58.89" lengthAdjust="spacing" stroke="#fafafa" stroke-width="0.18" >sigma21[16:0]</text>
<path d="M60.2,232.96 H63.6 V240.76 H66 V232.96 H69.8 V237.26" stroke="#6a9ad0" stroke-width="1" fill="none"/>
<circle cx="70.0" cy="240.06" r="3" fill="#28282e" stroke="#8a8a92" stroke-width="0.8"/><circle cx="70.0" cy="240.06" r="1.2" fill="#c8c8d0"/>
<text x="78.60" y="240.31" font-size="8.6" fill="#2a1020" font-family="Liberation Sans" textLength="10.41" lengthAdjust="spacing" stroke="#2a1020" stroke-width="0.18" >rst</text>
<path d="M44.7,248.38 L52.9,252.38 L44.7,256.58 Z" fill="#c4bcc6"/>
<rect x="60.1" y="246.98" width="13.1" height="6.5" fill="#4a90d8"/>
<rect x="60.1" y="246.98" width="13.1" height="2.5" fill="#a8d0f4"/>
<path d="M63,247.68 L66,252.98 M66,247.68 L63,252.98" stroke="#2a60b0" stroke-width="0.7"/>
<rect x="66.6" y="251.78" width="6.6" height="5.4" fill="#48b048" stroke="#a0e0a0" stroke-width="0.6"/><rect x="68.39999999999999" y="253.18" width="3" height="2.6" fill="none" stroke="#1a4a1a" stroke-width="0.7"/>
<text x="78.60" y="254.73" font-size="8.6" fill="#fafafa" font-family="Liberation Sans" textLength="65.14" lengthAdjust="spacing" stroke="#fafafa" stroke-width="0.18" >random_x[31:0]</text>
<path d="M44.7,262.80 L52.9,266.80 L44.7,271.00 Z" fill="#c4bcc6"/>
<rect x="60.1" y="261.40" width="13.1" height="6.5" fill="#4a90d8"/>
<rect x="60.1" y="261.40" width="13.1" height="2.5" fill="#a8d0f4"/>
<path d="M63,262.10 L66,267.40 M66,262.10 L63,267.40" stroke="#2a60b0" stroke-width="0.7"/>
<rect x="66.6" y="266.2" width="6.6" height="5.4" fill="#48b048" stroke="#a0e0a0" stroke-width="0.6"/><rect x="68.39999999999999" y="267.59999999999997" width="3" height="2.6" fill="none" stroke="#1a4a1a" stroke-width="0.7"/>
<text x="78.60" y="269.15" font-size="8.6" fill="#fafafa" font-family="Liberation Sans" textLength="65.14" lengthAdjust="spacing" stroke="#fafafa" stroke-width="0.18" >random_y[31:0]</text>
<path d="M60.2,276.22 H63.6 V284.02 H66 V276.22 H69.8 V280.52" stroke="#5aa040" stroke-width="1" fill="none"/>
<circle cx="70.0" cy="283.32" r="3" fill="#28282e" stroke="#8a8a92" stroke-width="0.8"/><circle cx="70.0" cy="283.32" r="1.2" fill="#c8c8d0"/>
<text x="78.60" y="283.57" font-size="8.6" fill="#fafafa" font-family="Liberation Sans" textLength="50.03" lengthAdjust="spacing" stroke="#fafafa" stroke-width="0.18" >lut_index_in</text>
<path d="M60.2,290.64 H63.6 V298.44 H66 V290.64 H69.8 V294.94" stroke="#5aa040" stroke-width="1" fill="none"/>
<circle cx="70.0" cy="297.74" r="3" fill="#28282e" stroke="#8a8a92" stroke-width="0.8"/><circle cx="70.0" cy="297.74" r="1.2" fill="#c8c8d0"/>
<text x="78.60" y="297.99" font-size="8.6" fill="#fafafa" font-family="Liberation Sans" textLength="55.25" lengthAdjust="spacing" stroke="#fafafa" stroke-width="0.18" >lut_index_in2</text>
<path d="M60.2,305.06 H63.6 V312.86 H66 V305.06 H69.8 V309.36" stroke="#5aa040" stroke-width="1" fill="none"/>
<circle cx="70.0" cy="312.16" r="3" fill="#28282e" stroke="#8a8a92" stroke-width="0.8"/><circle cx="70.0" cy="312.16" r="1.2" fill="#c8c8d0"/>
<text x="78.60" y="312.41" font-size="8.6" fill="#fafafa" font-family="Liberation Sans" textLength="52.64" lengthAdjust="spacing" stroke="#fafafa" stroke-width="0.18" >lut_index_ok</text>
<path d="M44.7,320.48 L52.9,324.48 L44.7,328.68 Z" fill="#c4bcc6"/>
<rect x="60.1" y="319.08" width="13.1" height="6.5" fill="#4a90d8"/>
<rect x="60.1" y="319.08" width="13.1" height="2.5" fill="#a8d0f4"/>
<path d="M63,319.78 L66,325.08 M66,319.78 L63,325.08" stroke="#2a60b0" stroke-width="0.7"/>
<circle cx="70.0" cy="326.88" r="3" fill="#28282e" stroke="#8a8a92" stroke-width="0.8"/><circle cx="70.0" cy="326.88" r="1.2" fill="#c8c8d0"/>
<text x="78.60" y="326.83" font-size="8.6" fill="#fafafa" font-family="Liberation Sans" textLength="68.09" lengthAdjust="spacing" stroke="#fafafa" stroke-width="0.18" >sigma11_s[16:0]</text>
<path d="M44.7,334.90 L52.9,338.90 L44.7,343.10 Z" fill="#c4bcc6"/>
<rect x="60.1" y="333.50" width="13.1" height="6.5" fill="#4a90d8"/>
<rect x="60.1" y="333.50" width="13.1" height="2.5" fill="#a8d0f4"/>
<path d="M63,334.20 L66,339.50 M66,334.20 L63,339.50" stroke="#2a60b0" stroke-width="0.7"/>
<circle cx="70.0" cy="341.3" r="3" fill="#28282e" stroke="#8a8a92" stroke-width="0.8"/><circle cx="70.0" cy="341.3" r="1.2" fill="#c8c8d0"/>
<text x="78.60" y="341.25" font-size="8.6" fill="#fafafa" font-family="Liberation Sans" textLength="68.79" lengthAdjust="spacing" stroke="#fafafa" stroke-width="0.18" >sigma12_s[16:0]</text>
<path d="M44.7,349.32 L52.9,353.32 L44.7,357.52 Z" fill="#c4bcc6"/>
<rect x="60.1" y="347.92" width="13.1" height="6.5" fill="#4a90d8"/>
<rect x="60.1" y="347.92" width="13.1" height="2.5" fill="#a8d0f4"/>
<path d="M63,348.62 L66,353.92 M66,348.62 L63,353.92" stroke="#2a60b0" stroke-width="0.7"/>
<circle cx="70.0" cy="355.72" r="3" fill="#28282e" stroke="#8a8a92" stroke-width="0.8"/><circle cx="70.0" cy="355.72" r="1.2" fill="#c8c8d0"/>
<text x="78.60" y="355.67" font-size="8.6" fill="#fafafa" font-family="Liberation Sans" textLength="68.79" lengthAdjust="spacing" stroke="#fafafa" stroke-width="0.18" >sigma22_s[16:0]</text>
<path d="M44.7,363.74 L52.9,367.74 L44.7,371.94 Z" fill="#c4bcc6"/>
<rect x="60.1" y="362.34" width="13.1" height="6.5" fill="#4a90d8"/>
<rect x="60.1" y="362.34" width="13.1" height="2.5" fill="#a8d0f4"/>
<path d="M63,363.04 L66,368.34 M66,363.04 L63,368.34" stroke="#2a60b0" stroke-width="0.7"/>
<circle cx="70.0" cy="370.14" r="3" fill="#28282e" stroke="#8a8a92" stroke-width="0.8"/><circle cx="70.0" cy="370.14" r="1.2" fill="#c8c8d0"/>
<text x="78.60" y="370.09" font-size="8.6" fill="#fafafa" font-family="Liberation Sans" textLength="68.79" lengthAdjust="spacing" stroke="#fafafa" stroke-width="0.18" >sigma21_s[16:0]</text>
<path d="M60.2,377.15 H63.6 V384.95 H66 V377.15 H69.8 V381.45" stroke="#5aa040" stroke-width="1" fill="none"/>
<circle cx="70.0" cy="384.25" r="3" fill="#28282e" stroke="#8a8a92" stroke-width="0.8"/><circle cx="70.0" cy="384.25" r="1.2" fill="#c8c8d0"/>
<text x="78.60" y="384.50" font-size="8.6" fill="#fafafa" font-family="Liberation Sans" textLength="38.05" lengthAdjust="spacing" stroke="#fafafa" stroke-width="0.18" >lutoutok1</text>
<path d="M44.7,392.57 L52.9,396.57 L44.7,400.77 Z" fill="#c4bcc6"/>
<rect x="60.1" y="391.17" width="13.1" height="6.5" fill="#4a90d8"/>
<rect x="60.1" y="391.17" width="13.1" height="2.5" fill="#a8d0f4"/>
<path d="M63,391.87 L66,397.17 M66,391.87 L63,397.17" stroke="#2a60b0" stroke-width="0.7"/>
<circle cx="70.0" cy="398.97" r="3" fill="#28282e" stroke="#8a8a92" stroke-width="0.8"/><circle cx="70.0" cy="398.97" r="1.2" fill="#c8c8d0"/>
<text x="78.60" y="398.92" font-size="8.6" fill="#fafafa" font-family="Liberation Sans" textLength="48.80" lengthAdjust="spacing" stroke="#fafafa" stroke-width="0.18" >mem11[0:7]</text>
<path d="M44.7,406.99 L52.9,410.99 L44.7,415.19 Z" fill="#c4bcc6"/>
<rect x="60.1" y="405.59" width="13.1" height="6.5" fill="#4a90d8"/>
<rect x="60.1" y="405.59" width="13.1" height="2.5" fill="#a8d0f4"/>
<path d="M63,406.29 L66,411.59 M66,406.29 L63,411.59" stroke="#2a60b0" stroke-width="0.7"/>
<circle cx="70.0" cy="413.39" r="3" fill="#28282e" stroke="#8a8a92" stroke-width="0.8"/><circle cx="70.0" cy="413.39" r="1.2" fill="#c8c8d0"/>
<text x="78.60" y="413.34" font-size="8.6" fill="#fafafa" font-family="Liberation Sans" textLength="49.50" lengthAdjust="spacing" stroke="#fafafa" stroke-width="0.18" >mem12[0:7]</text>
</g>
<g clip-path="url(#cpv)">
<text x="150.90" y="168.37" font-size="7.8" fill="#f0f0f0" font-family="Liberation Sans" textLength="4.55" lengthAdjust="spacing" stroke="#f0f0f0" stroke-width="0.22" >1</text>
<text x="150.90" y="182.79" font-size="7.8" fill="#f0f0f0" font-family="Liberation Sans" textLength="96.55" lengthAdjust="spacing" stroke="#f0f0f0" stroke-width="0.22" >00010011100010000</text>
<text x="150.90" y="197.21" font-size="7.8" fill="#f0f0f0" font-family="Liberation Sans" textLength="96.55" lengthAdjust="spacing" stroke="#f0f0f0" stroke-width="0.22" >00100111000100000</text>
<text x="150.90" y="211.63" font-size="7.8" fill="#f0f0f0" font-family="Liberation Sans" textLength="96.55" lengthAdjust="spacing" stroke="#f0f0f0" stroke-width="0.22" >00111010100110000</text>
<text x="150.90" y="226.05" font-size="7.8" fill="#f0f0f0" font-family="Liberation Sans" textLength="96.55" lengthAdjust="spacing" stroke="#f0f0f0" stroke-width="0.22" >00100111000100000</text>
<text x="150.90" y="240.46" font-size="7.8" fill="#101018" font-family="Liberation Sans" textLength="4.55" lengthAdjust="spacing" stroke="#101018" stroke-width="0.22" >0</text>
<text x="150.90" y="254.88" font-size="7.8" fill="#f0f0f0" font-family="Liberation Sans" textLength="96.55" lengthAdjust="spacing" stroke="#f0f0f0" stroke-width="0.22" >00001110010111010</text>
<text x="150.90" y="269.30" font-size="7.8" fill="#f0f0f0" font-family="Liberation Sans" textLength="96.55" lengthAdjust="spacing" stroke="#f0f0f0" stroke-width="0.22" >00010111000100001</text>
<text x="150.90" y="283.72" font-size="7.8" fill="#f0f0f0" font-family="Liberation Sans" textLength="21.80" lengthAdjust="spacing" stroke="#f0f0f0" stroke-width="0.22" >1001</text>
<text x="150.90" y="298.14" font-size="7.8" fill="#f0f0f0" font-family="Liberation Sans" textLength="96.55" lengthAdjust="spacing" stroke="#f0f0f0" stroke-width="0.22" >10000000000000000</text>
<text x="150.90" y="312.56" font-size="7.8" fill="#f0f0f0" font-family="Liberation Sans" textLength="4.55" lengthAdjust="spacing" stroke="#f0f0f0" stroke-width="0.22" >0</text>
<text x="150.90" y="326.98" font-size="7.8" fill="#f0f0f0" font-family="Liberation Sans" textLength="96.55" lengthAdjust="spacing" stroke="#f0f0f0" stroke-width="0.22" >00010011100010000</text>
<text x="150.90" y="341.40" font-size="7.8" fill="#f0f0f0" font-family="Liberation Sans" textLength="96.55" lengthAdjust="spacing" stroke="#f0f0f0" stroke-width="0.22" >00100111000100000</text>
<text x="150.90" y="355.82" font-size="7.8" fill="#f0f0f0" font-family="Liberation Sans" textLength="96.55" lengthAdjust="spacing" stroke="#f0f0f0" stroke-width="0.22" >00111010100110000</text>
<text x="150.90" y="370.24" font-size="7.8" fill="#f0f0f0" font-family="Liberation Sans" textLength="96.55" lengthAdjust="spacing" stroke="#f0f0f0" stroke-width="0.22" >00100111000100000</text>
<text x="150.90" y="384.65" font-size="7.8" fill="#f0f0f0" font-family="Liberation Sans" textLength="4.55" lengthAdjust="spacing" stroke="#f0f0f0" stroke-width="0.22" >0</text>
<text x="150.90" y="399.07" font-size="7.8" fill="#f0f0f0" font-family="Liberation Sans" textLength="79.30" lengthAdjust="spacing" stroke="#f0f0f0" stroke-width="0.22" >[0000001001010</text>
<text x="150.90" y="413.49" font-size="7.8" fill="#f0f0f0" font-family="Liberation Sans" textLength="79.30" lengthAdjust="spacing" stroke="#f0f0f0" stroke-width="0.22" >[0000010010101</text>
</g>
<line x1="39.50" y1="417.20" x2="142.50" y2="417.20" stroke="#707078" stroke-width="1" />
<line x1="146.30" y1="417.20" x2="213.00" y2="417.20" stroke="#707078" stroke-width="1" />
<defs><pattern id="tog0" x="0" y="160.57" width="4.5" height="5.1" patternUnits="userSpaceOnUse"><path d="M0.4,0.6 L4.1,4.5 M4.1,0.6 L0.4,4.5 M1.2,0.4 H3.3 M1.2,4.7 H3.3" stroke="#10f010" stroke-width="0.85" fill="none"/></pattern><pattern id="tog6" x="0" y="247.18" width="4.5" height="5.1" patternUnits="userSpaceOnUse"><path d="M0.4,0.6 L4.1,4.5 M4.1,0.6 L0.4,4.5 M1.2,0.4 H3.3 M1.2,4.7 H3.3" stroke="#10f010" stroke-width="0.85" fill="none"/></pattern><pattern id="tog7" x="0" y="261.60" width="4.5" height="5.1" patternUnits="userSpaceOnUse"><path d="M0.4,0.6 L4.1,4.5 M4.1,0.6 L0.4,4.5 M1.2,0.4 H3.3 M1.2,4.7 H3.3" stroke="#10f010" stroke-width="0.85" fill="none"/></pattern><pattern id="udot" x="0" y="0" width="2" height="2" patternUnits="userSpaceOnUse"><rect x="0" y="0" width="2" height="2" fill="#2a1800"/><rect x="0" y="0" width="1" height="1" fill="#7a4a0c"/><rect x="1" y="1" width="1" height="1" fill="#503006"/></pattern><pattern id="gdot" x="0" y="0" width="2" height="2" patternUnits="userSpaceOnUse"><rect x="0" y="0" width="1" height="1" fill="#0a7a1a"/><rect x="1" y="1" width="1" height="1" fill="#0a6a14"/></pattern></defs>
<g clip-path="url(#cpw)">
<line x1="217.10" y1="158.40" x2="736.00" y2="158.40" stroke="#f4f4f4" stroke-width="1.5" />
<line x1="219.50" y1="146.20" x2="219.50" y2="158.00" stroke="#d8d0e0" stroke-width="1" />
<line x1="236.10" y1="155.00" x2="236.10" y2="158.00" stroke="#f0f0f0" stroke-width="1.2" />
<line x1="252.70" y1="155.00" x2="252.70" y2="158.00" stroke="#f0f0f0" stroke-width="1.2" />
<line x1="269.30" y1="155.00" x2="269.30" y2="158.00" stroke="#f0f0f0" stroke-width="1.2" />
<line x1="285.90" y1="155.00" x2="285.90" y2="158.00" stroke="#f0f0f0" stroke-width="1.2" />
<line x1="302.50" y1="146.20" x2="302.50" y2="158.00" stroke="#d8d0e0" stroke-width="1" />
<line x1="319.50" y1="155.00" x2="319.50" y2="158.00" stroke="#f0f0f0" stroke-width="1.2" />
<line x1="336.50" y1="155.00" x2="336.50" y2="158.00" stroke="#f0f0f0" stroke-width="1.2" />
<line x1="353.50" y1="155.00" x2="353.50" y2="158.00" stroke="#f0f0f0" stroke-width="1.2" />
<line x1="370.50" y1="155.00" x2="370.50" y2="158.00" stroke="#f0f0f0" stroke-width="1.2" />
<line x1="387.50" y1="146.20" x2="387.50" y2="158.00" stroke="#d8d0e0" stroke-width="1" />
<line x1="404.10" y1="155.00" x2="404.10" y2="158.00" stroke="#f0f0f0" stroke-width="1.2" />
<line x1="420.70" y1="155.00" x2="420.70" y2="158.00" stroke="#f0f0f0" stroke-width="1.2" />
<line x1="437.30" y1="155.00" x2="437.30" y2="158.00" stroke="#f0f0f0" stroke-width="1.2" />
<line x1="453.90" y1="155.00" x2="453.90" y2="158.00" stroke="#f0f0f0" stroke-width="1.2" />
<line x1="470.50" y1="146.20" x2="470.50" y2="158.00" stroke="#d8d0e0" stroke-width="1" />
<line x1="487.10" y1="155.00" x2="487.10" y2="158.00" stroke="#f0f0f0" stroke-width="1.2" />
<line x1="503.70" y1="155.00" x2="503.70" y2="158.00" stroke="#f0f0f0" stroke-width="1.2" />
<line x1="520.30" y1="155.00" x2="520.30" y2="158.00" stroke="#f0f0f0" stroke-width="1.2" />
<line x1="536.90" y1="155.00" x2="536.90" y2="158.00" stroke="#f0f0f0" stroke-width="1.2" />
<line x1="553.50" y1="146.20" x2="553.50" y2="158.00" stroke="#d8d0e0" stroke-width="1" />
<line x1="570.10" y1="155.00" x2="570.10" y2="158.00" stroke="#f0f0f0" stroke-width="1.2" />
<line x1="586.70" y1="155.00" x2="586.70" y2="158.00" stroke="#f0f0f0" stroke-width="1.2" />
<line x1="603.30" y1="155.00" x2="603.30" y2="158.00" stroke="#f0f0f0" stroke-width="1.2" />
<line x1="619.90" y1="155.00" x2="619.90" y2="158.00" stroke="#f0f0f0" stroke-width="1.2" />
<line x1="636.50" y1="146.20" x2="636.50" y2="158.00" stroke="#d8d0e0" stroke-width="1" />
<line x1="653.30" y1="155.00" x2="653.30" y2="158.00" stroke="#f0f0f0" stroke-width="1.2" />
<line x1="670.10" y1="155.00" x2="670.10" y2="158.00" stroke="#f0f0f0" stroke-width="1.2" />
<line x1="686.90" y1="155.00" x2="686.90" y2="158.00" stroke="#f0f0f0" stroke-width="1.2" />
<line x1="703.70" y1="155.00" x2="703.70" y2="158.00" stroke="#f0f0f0" stroke-width="1.2" />
<line x1="720.50" y1="146.20" x2="720.50" y2="158.00" stroke="#d8d0e0" stroke-width="1" />
<line x1="737.30" y1="155.00" x2="737.30" y2="158.00" stroke="#f0f0f0" stroke-width="1.2" />
<text x="221.00" y="152.20" font-size="8.2" fill="#f0f0f0" font-family="Liberation Sans" textLength="16.50" lengthAdjust="spacingAndGlyphs" >0 ns</text>
<text x="304.00" y="152.20" font-size="8.2" fill="#f0f0f0" font-family="Liberation Sans" textLength="27.50" lengthAdjust="spacingAndGlyphs" >500 ns</text>
<text x="389.00" y="152.20" font-size="8.2" fill="#f0f0f0" font-family="Liberation Sans" textLength="34.00" lengthAdjust="spacingAndGlyphs" >1,000 ns</text>
<text x="472.00" y="152.20" font-size="8.2" fill="#f0f0f0" font-family="Liberation Sans" textLength="34.00" lengthAdjust="spacingAndGlyphs" >1,500 ns</text>
<text x="555.00" y="152.20" font-size="8.2" fill="#f0f0f0" font-family="Liberation Sans" textLength="34.00" lengthAdjust="spacingAndGlyphs" >2,000 ns</text>
<text x="638.00" y="152.20" font-size="8.2" fill="#f0f0f0" font-family="Liberation Sans" textLength="34.00" lengthAdjust="spacingAndGlyphs" >2,500 ns</text>
<text x="722.00" y="152.20" font-size="8.2" fill="#f0f0f0" font-family="Liberation Sans" textLength="34.00" lengthAdjust="spacingAndGlyphs" >3,000 ns</text>
<line x1="219.60" y1="417.50" x2="736.00" y2="417.50" stroke="#8a8a94" stroke-width="1" />
<rect x="219.60" y="166.37" width="167.90" height="4.60" fill="url(#udot)" />
<line x1="219.60" y1="165.77" x2="387.50" y2="165.77" stroke="#d89010" stroke-width="1" />
<rect x="387.50" y="160.57" width="331.00" height="10.20" fill="url(#tog0)" />
<path d="M220.00,180.50 L223.00,175.50 L384.50,175.50 L387.50,180.50 L384.50,185.50 L223.00,185.50 Z" stroke="#f5a50a" stroke-width="1.2" fill="none" stroke-linejoin="round"/>
<text x="303.55" y="182.79" font-size="8.2" fill="#f4f4f4" font-family="Liberation Sans" text-anchor="middle" textLength="100.00" lengthAdjust="spacingAndGlyphs" stroke="#f4f4f4" stroke-width="0.15" >UUUUUUUUUUUUUUUUU</text>
<path d="M387.50,180.50 L390.50,175.50 L717.50,175.50 L720.50,180.50 L717.50,185.50 L390.50,185.50 Z" stroke="#18f018" stroke-width="1.2" fill="none" stroke-linejoin="round"/>
<text x="554.00" y="182.79" font-size="8.2" fill="#f4f4f4" font-family="Liberation Sans" text-anchor="middle" textLength="84.50" lengthAdjust="spacingAndGlyphs" stroke="#f4f4f4" stroke-width="0.15" >00010011100010000</text>
<path d="M220.00,194.50 L223.00,189.50 L384.50,189.50 L387.50,194.50 L384.50,199.50 L223.00,199.50 Z" stroke="#f5a50a" stroke-width="1.2" fill="none" stroke-linejoin="round"/>
<text x="303.55" y="197.21" font-size="8.2" fill="#f4f4f4" font-family="Liberation Sans" text-anchor="middle" textLength="100.00" lengthAdjust="spacingAndGlyphs" stroke="#f4f4f4" stroke-width="0.15" >UUUUUUUUUUUUUUUUU</text>
<path d="M387.50,194.50 L390.50,189.50 L717.50,189.50 L720.50,194.50 L717.50,199.50 L390.50,199.50 Z" stroke="#18f018" stroke-width="1.2" fill="none" stroke-linejoin="round"/>
<text x="554.00" y="197.21" font-size="8.2" fill="#f4f4f4" font-family="Liberation Sans" text-anchor="middle" textLength="84.50" lengthAdjust="spacingAndGlyphs" stroke="#f4f4f4" stroke-width="0.15" >00100111000100000</text>
<path d="M220.00,208.50 L223.00,203.50 L384.50,203.50 L387.50,208.50 L384.50,213.50 L223.00,213.50 Z" stroke="#f5a50a" stroke-width="1.2" fill="none" stroke-linejoin="round"/>
<text x="303.55" y="211.63" font-size="8.2" fill="#f4f4f4" font-family="Liberation Sans" text-anchor="middle" textLength="100.00" lengthAdjust="spacingAndGlyphs" stroke="#f4f4f4" stroke-width="0.15" >UUUUUUUUUUUUUUUUU</text>
<path d="M387.50,208.50 L390.50,203.50 L717.50,203.50 L720.50,208.50 L717.50,213.50 L390.50,213.50 Z" stroke="#18f018" stroke-width="1.2" fill="none" stroke-linejoin="round"/>
<text x="554.00" y="211.63" font-size="8.2" fill="#f4f4f4" font-family="Liberation Sans" text-anchor="middle" textLength="84.50" lengthAdjust="spacingAndGlyphs" stroke="#f4f4f4" stroke-width="0.15" >00111010100110000</text>
<path d="M220.00,223.50 L223.00,218.50 L384.50,218.50 L387.50,223.50 L384.50,228.50 L223.00,228.50 Z" stroke="#f5a50a" stroke-width="1.2" fill="none" stroke-linejoin="round"/>
<text x="303.55" y="226.05" font-size="8.2" fill="#f4f4f4" font-family="Liberation Sans" text-anchor="middle" textLength="100.00" lengthAdjust="spacingAndGlyphs" stroke="#f4f4f4" stroke-width="0.15" >UUUUUUUUUUUUUUUUU</text>
<path d="M387.50,223.50 L390.50,218.50 L717.50,218.50 L720.50,223.50 L717.50,228.50 L390.50,228.50 Z" stroke="#18f018" stroke-width="1.2" fill="none" stroke-linejoin="round"/>
<text x="554.00" y="226.05" font-size="8.2" fill="#f4f4f4" font-family="Liberation Sans" text-anchor="middle" textLength="84.50" lengthAdjust="spacingAndGlyphs" stroke="#f4f4f4" stroke-width="0.15" >00100111000100000</text>
<path d="M220.00,324.50 L223.00,319.50 L384.50,319.50 L387.50,324.50 L384.50,329.50 L223.00,329.50 Z" stroke="#f5a50a" stroke-width="1.2" fill="none" stroke-linejoin="round"/>
<text x="303.55" y="326.98" font-size="8.2" fill="#f4f4f4" font-family="Liberation Sans" text-anchor="middle" textLength="100.00" lengthAdjust="spacingAndGlyphs" stroke="#f4f4f4" stroke-width="0.15" >UUUUUUUUUUUUUUUUU</text>
<path d="M387.50,324.50 L390.50,319.50 L717.50,319.50 L720.50,324.50 L717.50,329.50 L390.50,329.50 Z" stroke="#18f018" stroke-width="1.2" fill="none" stroke-linejoin="round"/>
<text x="554.00" y="326.98" font-size="8.2" fill="#f4f4f4" font-family="Liberation Sans" text-anchor="middle" textLength="84.50" lengthAdjust="spacingAndGlyphs" stroke="#f4f4f4" stroke-width="0.15" >00010011100010000</text>
<path d="M220.00,338.50 L223.00,333.50 L384.50,333.50 L387.50,338.50 L384.50,343.50 L223.00,343.50 Z" stroke="#f5a50a" stroke-width="1.2" fill="none" stroke-linejoin="round"/>
<text x="303.55" y="341.40" font-size="8.2" fill="#f4f4f4" font-family="Liberation Sans" text-anchor="middle" textLength="100.00" lengthAdjust="spacingAndGlyphs" stroke="#f4f4f4" stroke-width="0.15" >UUUUUUUUUUUUUUUUU</text>
<path d="M387.50,338.50 L390.50,333.50 L717.50,333.50 L720.50,338.50 L717.50,343.50 L390.50,343.50 Z" stroke="#18f018" stroke-width="1.2" fill="none" stroke-linejoin="round"/>
<text x="554.00" y="341.40" font-size="8.2" fill="#f4f4f4" font-family="Liberation Sans" text-anchor="middle" textLength="84.50" lengthAdjust="spacingAndGlyphs" stroke="#f4f4f4" stroke-width="0.15" >00100111000100000</text>
<path d="M220.00,353.50 L223.00,348.50 L384.50,348.50 L387.50,353.50 L384.50,358.50 L223.00,358.50 Z" stroke="#f5a50a" stroke-width="1.2" fill="none" stroke-linejoin="round"/>
<text x="303.55" y="355.82" font-size="8.2" fill="#f4f4f4" font-family="Liberation Sans" text-anchor="middle" textLength="100.00" lengthAdjust="spacingAndGlyphs" stroke="#f4f4f4" stroke-width="0.15" >UUUUUUUUUUUUUUUUU</text>
<path d="M387.50,353.50 L390.50,348.50 L717.50,348.50 L720.50,353.50 L717.50,358.50 L390.50,358.50 Z" stroke="#18f018" stroke-width="1.2" fill="none" stroke-linejoin="round"/>
<text x="554.00" y="355.82" font-size="8.2" fill="#f4f4f4" font-family="Liberation Sans" text-anchor="middle" textLength="84.50" lengthAdjust="spacingAndGlyphs" stroke="#f4f4f4" stroke-width="0.15" >00111010100110000</text>
<path d="M220.00,367.50 L223.00,362.50 L384.50,362.50 L387.50,367.50 L384.50,372.50 L223.00,372.50 Z" stroke="#f5a50a" stroke-width="1.2" fill="none" stroke-linejoin="round"/>
<text x="303.55" y="370.24" font-size="8.2" fill="#f4f4f4" font-family="Liberation Sans" text-anchor="middle" textLength="100.00" lengthAdjust="spacingAndGlyphs" stroke="#f4f4f4" stroke-width="0.15" >UUUUUUUUUUUUUUUUU</text>
<path d="M387.50,367.50 L390.50,362.50 L717.50,362.50 L720.50,367.50 L717.50,372.50 L390.50,372.50 Z" stroke="#18f018" stroke-width="1.2" fill="none" stroke-linejoin="round"/>
<text x="554.00" y="370.24" font-size="8.2" fill="#f4f4f4" font-family="Liberation Sans" text-anchor="middle" textLength="84.50" lengthAdjust="spacingAndGlyphs" stroke="#f4f4f4" stroke-width="0.15" >00100111000100000</text>
<rect x="219.60" y="238.46" width="167.90" height="4.60" fill="url(#udot)" />
<line x1="219.60" y1="237.86" x2="387.50" y2="237.86" stroke="#d89010" stroke-width="1" />
<rect x="387.50" y="232.86" width="166.00" height="9.80" fill="url(#gdot)" />
<path d="M387.50,242.66 V232.86 H552.50 V242.66 H720.50" stroke="#18f018" stroke-width="1.3" fill="none" />
<path d="M220.00,252.50 L223.00,247.50 L550.50,247.50 L553.50,252.50 L550.50,257.50 L223.00,257.50 Z" stroke="#f5a50a" stroke-width="1.2" fill="none" stroke-linejoin="round"/>
<text x="386.55" y="254.88" font-size="8.2" fill="#f4f4f4" font-family="Liberation Sans" text-anchor="middle" textLength="163.00" lengthAdjust="spacingAndGlyphs" stroke="#f4f4f4" stroke-width="0.15" >ZZZZZZZZZZZZZZZZZZZZZZZZZZZZUUUU</text>
<rect x="555.00" y="247.18" width="163.00" height="10.20" fill="url(#tog6)" />
<path d="M717.00,247.18 H723.00 M717.00,257.18 H723.00 M717.50,247.18 L722.50,257.18 M722.50,247.18 L717.50,257.18" stroke="#18f018" stroke-width="1.1" fill="none" />
<path d="M220.00,266.50 L223.00,261.50 L550.50,261.50 L553.50,266.50 L550.50,271.50 L223.00,271.50 Z" stroke="#f5a50a" stroke-width="1.2" fill="none" stroke-linejoin="round"/>
<text x="386.55" y="269.30" font-size="8.2" fill="#f4f4f4" font-family="Liberation Sans" text-anchor="middle" textLength="163.00" lengthAdjust="spacingAndGlyphs" stroke="#f4f4f4" stroke-width="0.15" >ZZZZZZZZZZZZZZZZZZZZZZZZZZZZUUUU</text>
<rect x="555.00" y="261.60" width="163.00" height="10.20" fill="url(#tog7)" />
<path d="M717.00,261.60 H723.00 M717.00,271.60 H723.00 M717.50,261.60 L722.50,271.60 M722.50,261.60 L717.50,271.60" stroke="#18f018" stroke-width="1.1" fill="none" />
<path d="M220.00,281.50 L223.00,276.50 L384.50,276.50 L387.50,281.50 L384.50,286.50 L223.00,286.50 Z" stroke="#18f018" stroke-width="1.2" fill="none" stroke-linejoin="round"/>
<text x="303.55" y="283.72" font-size="8.2" fill="#f4f4f4" font-family="Liberation Sans" text-anchor="middle" textLength="159.00" lengthAdjust="spacingAndGlyphs" stroke="#f4f4f4" stroke-width="0.15" >10000000000000000000000000000000</text>
<path d="M387.50,281.50 L390.50,276.50 L550.50,276.50 L553.50,281.50 L550.50,286.50 L390.50,286.50 Z" stroke="#18f018" stroke-width="1.2" fill="none" stroke-linejoin="round"/>
<text x="470.50" y="283.72" font-size="8.2" fill="#f4f4f4" font-family="Liberation Sans" text-anchor="middle" textLength="5.00" lengthAdjust="spacingAndGlyphs" stroke="#f4f4f4" stroke-width="0.15" >0</text>
<path d="M553.50,281.50 L556.50,276.50 L717.50,276.50 L720.50,281.50 L717.50,286.50 L556.50,286.50 Z" stroke="#18f018" stroke-width="1.2" fill="none" stroke-linejoin="round"/>
<text x="637.00" y="283.72" font-size="8.2" fill="#f4f4f4" font-family="Liberation Sans" text-anchor="middle" textLength="21.00" lengthAdjust="spacingAndGlyphs" stroke="#f4f4f4" stroke-width="0.15" >1001</text>
<path d="M220.00,295.50 L223.00,290.50 L717.50,290.50 L720.50,295.50 L717.50,300.50 L223.00,300.50 Z" stroke="#18f018" stroke-width="1.2" fill="none" stroke-linejoin="round"/>
<text x="470.05" y="298.14" font-size="8.2" fill="#f4f4f4" font-family="Liberation Sans" text-anchor="middle" textLength="158.50" lengthAdjust="spacingAndGlyphs" stroke="#f4f4f4" stroke-width="0.15" >10000000000000000000000000000000</text>
<rect x="219.60" y="310.56" width="167.90" height="4.60" fill="url(#udot)" />
<line x1="219.60" y1="309.96" x2="387.50" y2="309.96" stroke="#d89010" stroke-width="1" />
<line x1="387.50" y1="314.86" x2="720.50" y2="314.86" stroke="#18f018" stroke-width="1.3" />
<rect x="219.60" y="382.65" width="167.90" height="4.60" fill="url(#udot)" />
<line x1="219.60" y1="382.06" x2="387.50" y2="382.06" stroke="#d89010" stroke-width="1" />
<line x1="387.50" y1="386.95" x2="720.50" y2="386.95" stroke="#18f018" stroke-width="1.3" />
<path d="M220.00,396.50 L223.00,391.50 L550.50,391.50 L553.50,396.50 L550.50,401.50 L223.00,401.50 Z" stroke="#f5a50a" stroke-width="1.2" fill="none" stroke-linejoin="round"/>
<text x="225.00" y="399.07" font-size="8.2" fill="#f4f4f4" font-family="Liberation Sans" textLength="322.50" lengthAdjust="spacingAndGlyphs" >[UUUUUUUUUUUUUUUUUUUUUUUUUUUUUUUUU,UUUUUUUUUUUUUUUUUUU...</text>
<path d="M553.50,396.50 L556.50,391.50 L717.50,391.50 L720.50,396.50 L717.50,401.50 L556.50,401.50 Z" stroke="#18f018" stroke-width="1.2" fill="none" stroke-linejoin="round"/>
<text x="558.00" y="399.07" font-size="8.2" fill="#f4f4f4" font-family="Liberation Sans" textLength="155.00" lengthAdjust="spacingAndGlyphs" >[00000010010101010011101100100000...</text>
<path d="M220.00,410.50 L223.00,405.50 L550.50,405.50 L553.50,410.50 L550.50,415.50 L223.00,415.50 Z" stroke="#f5a50a" stroke-width="1.2" fill="none" stroke-linejoin="round"/>
<text x="225.00" y="413.49" font-size="8.2" fill="#f4f4f4" font-family="Liberation Sans" textLength="322.50" lengthAdjust="spacingAndGlyphs" >[UUUUUUUUUUUUUUUUUUUUUUUUUUUUUUUUU,UUUUUUUUUUUUUUUUUUU...</text>
<path d="M553.50,410.50 L556.50,405.50 L717.50,405.50 L720.50,410.50 L717.50,415.50 L556.50,415.50 Z" stroke="#18f018" stroke-width="1.2" fill="none" stroke-linejoin="round"/>
<text x="558.00" y="413.49" font-size="8.2" fill="#f4f4f4" font-family="Liberation Sans" textLength="155.00" lengthAdjust="spacingAndGlyphs" >[00000100101010100111011001000000...</text>
<line x1="219.50" y1="158.80" x2="219.50" y2="417.00" stroke="#bab4c4" stroke-width="1" />
<line x1="302.50" y1="158.80" x2="302.50" y2="417.00" stroke="#bab4c4" stroke-width="1" />
<line x1="387.50" y1="158.80" x2="387.50" y2="417.00" stroke="#bab4c4" stroke-width="1" />
<line x1="470.50" y1="158.80" x2="470.50" y2="417.00" stroke="#bab4c4" stroke-width="1" />
<line x1="553.50" y1="158.80" x2="553.50" y2="417.00" stroke="#bab4c4" stroke-width="1" />
<line x1="636.50" y1="158.80" x2="636.50" y2="417.00" stroke="#bab4c4" stroke-width="1" />
<line x1="720.50" y1="158.80" x2="720.50" y2="417.00" stroke="#bab4c4" stroke-width="1" />
</g>
<rect x="200.00" y="287.40" width="164.20" height="12.40" fill="#ffffe1" />
<rect x="200.3" y="287.7" width="163.6" height="11.8" fill="none" stroke="#e8e8c8" stroke-width="0.6"/>
<text x="203.00" y="297.20" font-size="9.2" fill="#2a0a1a" font-family="Liberation Sans" textLength="158.00" lengthAdjust="spacingAndGlyphs" >00010111000100001111111110110000</text>
<line x1="621.50" y1="118.00" x2="621.50" y2="417.00" stroke="#ffff10" stroke-width="1" />
<rect x="621.40" y="118.30" width="55.70" height="9.80" fill="#ffff20" />
<text x="622.50" y="126.60" font-size="8.2" fill="#101010" font-family="Liberation Sans" textLength="53.50" lengthAdjust="spacingAndGlyphs" >2,412.621 ns</text>
<rect x="679.30" y="129.90" width="56.70" height="8.90" fill="#2a8af0" />
<line x1="680.50" y1="130.00" x2="680.50" y2="417.00" stroke="#2a88ff" stroke-width="2" />
<text x="681.00" y="137.60" font-size="8.2" fill="#0a0a20" font-family="Liberation Sans" textLength="54.00" lengthAdjust="spacingAndGlyphs" >2,760.920 ns</text>
<rect x="220.8" y="428.5" width="76.4" height="15" rx="4" fill="#ffffff"/>
<text x="224.00" y="437.90" font-size="8.2" fill="#303038" font-family="Liberation Sans" textLength="68.50" lengthAdjust="spacingAndGlyphs" >X1: 2,412.621 ns</text>
<rect x="39.50" y="445.60" width="697.00" height="11.00" fill="#efeff2" />
<rect x="54.10" y="447.3" width="57.40" height="9.4" rx="1" fill="#dcdce0" stroke="#b4b4bc" stroke-width="0.8"/>
<rect x="159.70" y="447.3" width="5.10" height="9.4" rx="1" fill="#dcdce0" stroke="#b4b4bc" stroke-width="0.8"/>
<rect x="232.40" y="447.3" width="163.30" height="9.4" rx="1" fill="#dcdce0" stroke="#b4b4bc" stroke-width="0.8"/>
<line x1="80.50" y1="449.50" x2="80.50" y2="454.50" stroke="#404048" stroke-width="1" />
<line x1="82.50" y1="449.50" x2="82.50" y2="454.50" stroke="#404048" stroke-width="1" />
<line x1="84.50" y1="449.50" x2="84.50" y2="454.50" stroke="#404048" stroke-width="1" />
<line x1="311.50" y1="449.50" x2="311.50" y2="454.50" stroke="#505058" stroke-width="1" />
<line x1="313.50" y1="449.50" x2="313.50" y2="454.50" stroke="#505058" stroke-width="1" />
<line x1="315.50" y1="449.50" x2="315.50" y2="454.50" stroke="#505058" stroke-width="1" />
<path d="M47.80,449.2 L44.30,451.6 L47.80,454 Z" fill="#303038"/>
<path d="M134.80,449.2 L138.30,451.6 L134.80,454 Z" fill="#303038"/>
<path d="M153.30,449.2 L149.80,451.6 L153.30,454 Z" fill="#303038"/>
<path d="M205.00,449.2 L208.50,451.6 L205.00,454 Z" fill="#303038"/>
<path d="M225.50,449.2 L222.00,451.6 L225.50,454 Z" fill="#303038"/>
<path d="M727.50,449.2 L731.00,451.6 L727.50,454 Z" fill="#303038"/>
<text x="195.30" y="477.00" font-size="13.4" fill="#101010" font-family="Liberation Serif" textLength="324.00" lengthAdjust="spacingAndGlyphs" xml:space="preserve">Fig. 5  Output window generated using isim simulator Xilinx 14.1</text>
</svg></body></html>
